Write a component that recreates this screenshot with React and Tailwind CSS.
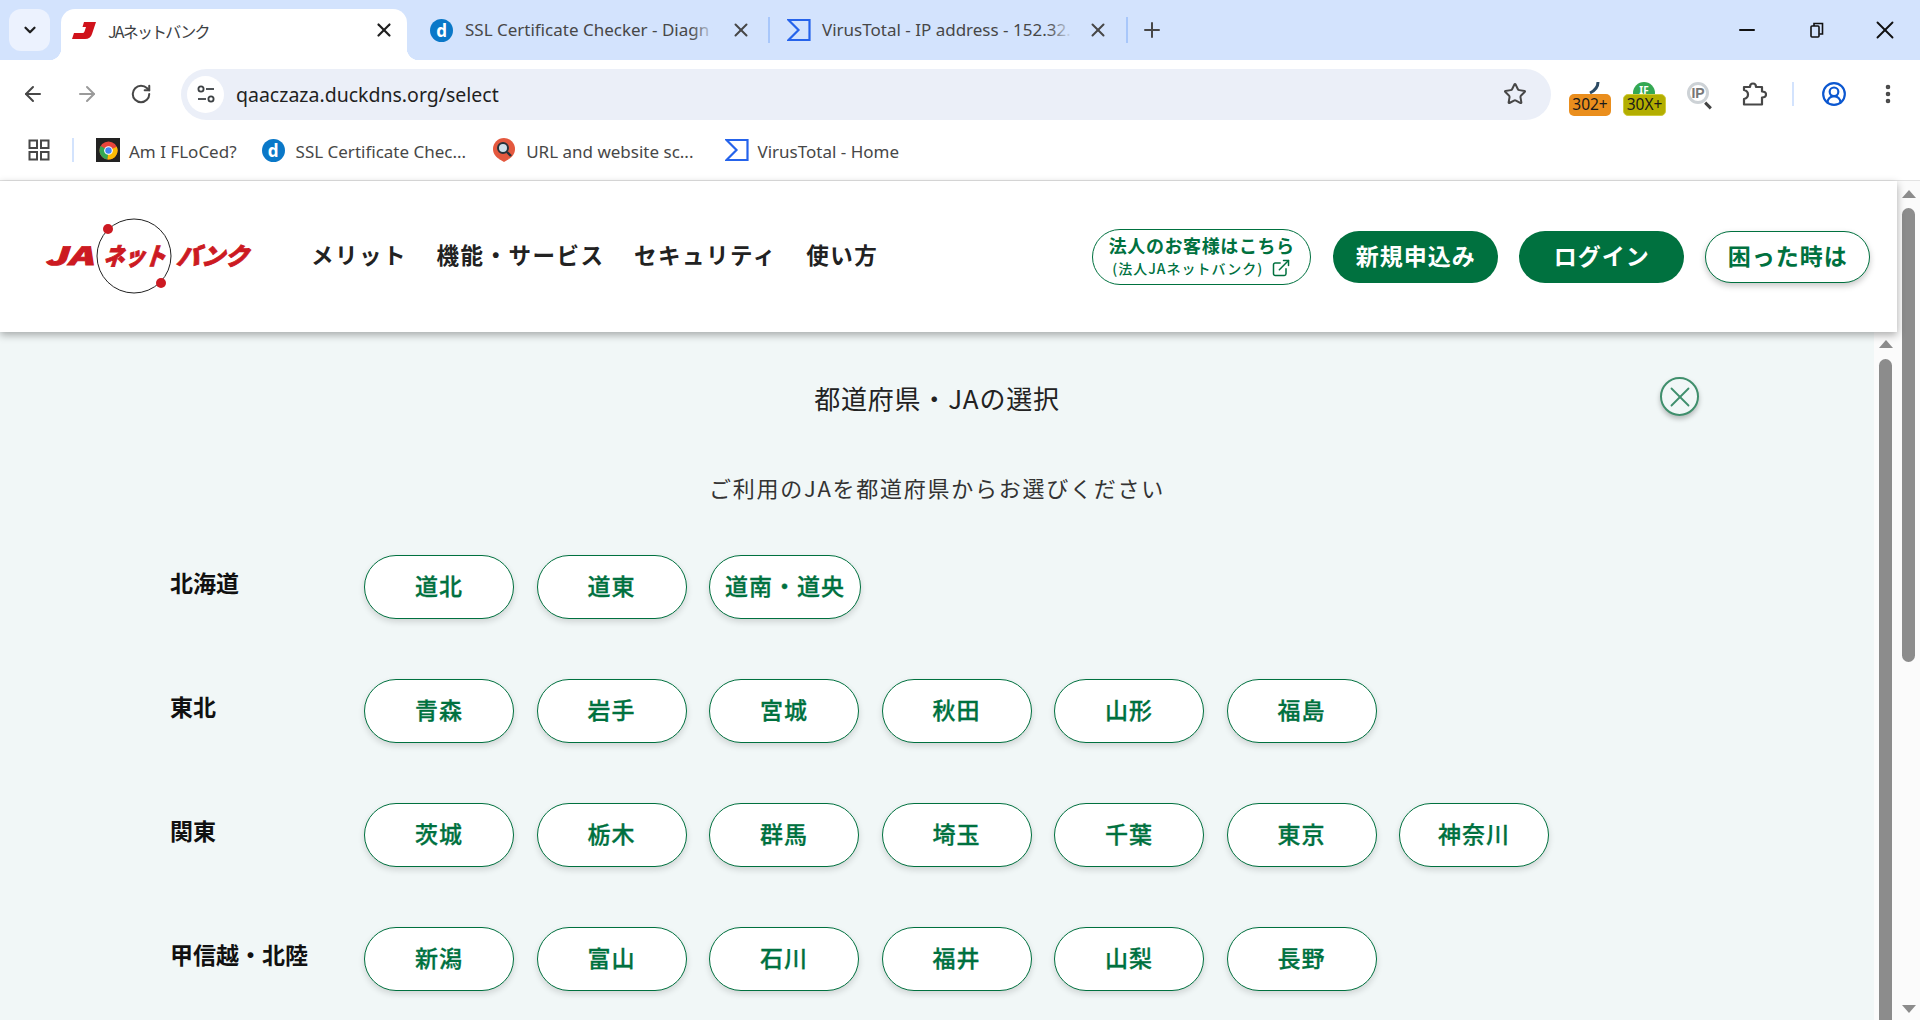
import { ArrowLeft, ArrowRight, RotateCw, Star, X, Plus, Minus, CircleUserRound, EllipsisVertical, ChevronDown, ExternalLink } from 'lucide-react';

const regions = [
  { name: '北海道', items: ['道北', '道東', '道南・道央'] },
  { name: '東北', items: ['青森', '岩手', '宮城', '秋田', '山形', '福島'] },
  { name: '関東', items: ['茨城', '栃木', '群馬', '埼玉', '千葉', '東京', '神奈川'] },
  { name: '甲信越・北陸', items: ['新潟', '富山', '石川', '福井', '山梨', '長野'] },
];

const uiFont = "font-['Noto_Sans','Noto_Sans_CJK_JP',sans-serif]";
const jpFont = "font-['Noto_Sans_CJK_JP','Noto_Sans',sans-serif]";

const VtIcon = () => (
  <svg width="24" height="24" viewBox="0 0 24 24" fill="none" stroke="#2563eb" strokeWidth="2.2" className="shrink-0">
    <path d="M1.5 2 H22.5 V22 H1.5 L11.5 12 Z" />
  </svg>
);

const DIcon = () => (
  <span className="flex h-[23px] w-[23px] shrink-0 items-center justify-center rounded-full bg-[#0a78c8] text-[17px] font-bold leading-none text-white">
    d
  </span>
);

const JIcon = () => (
  <svg width="24" height="17" viewBox="0 0 24 17">
    <path d="M12 0 H24 L20 12 Q18.5 17 13 17 H0 L2 11 H10.5 Q12 11 12.5 9.5 L14 5 H10.5 Z" fill="#d0121b" />
  </svg>
);

const ChromeIcon = () => (
  <span className="flex h-6 w-6 shrink-0 items-center justify-center bg-[#222]">
    <svg width="19" height="19" viewBox="0 0 20 20">
      <circle cx="10" cy="10" r="9.5" fill="#e8453c" />
      <path d="M10 10 L1.8 5.2 A9.5 9.5 0 0 0 9 19.4 Z" fill="#34a853" />
      <path d="M10 10 L18.7 6 A9.5 9.5 0 0 1 9 19.4 Z" fill="#fbbc05" />
      <circle cx="10" cy="10" r="4.6" fill="#fff" />
      <circle cx="10" cy="10" r="3.4" fill="#4285f4" />
    </svg>
  </span>
);

const ScanIcon = () => (
  <svg width="22" height="24" viewBox="0 0 22 24" className="shrink-0">
    <circle cx="11" cy="11" r="11" fill="#e4583e" />
    <path d="M6 21 H16 L11 24 Z" fill="#e4583e" />
    <circle cx="10" cy="10" r="5" fill="#cfe0ea" stroke="#26323a" strokeWidth="2" />
    <path d="M14 14 L18 18" stroke="#26323a" strokeWidth="2.4" />
  </svg>
);

const TuneIcon = () => (
  <svg width="22" height="22" viewBox="0 0 22 22" fill="none" stroke="#3c4043" strokeWidth="1.8">
    <circle cx="6" cy="6" r="2.6" />
    <path d="M11 6 H19" />
    <circle cx="16" cy="16" r="2.6" />
    <path d="M3 16 H11" />
  </svg>
);

const PuzzleIcon = () => (
  <svg width="25" height="24" viewBox="0 0 25 24" fill="none" stroke="#474747" strokeWidth="2.2" strokeLinejoin="round">
    <path d="M2 5 H8 Q8 1.5 11 1.5 Q14 1.5 14 5 H20 V9.5 Q24 9.5 24 12.5 Q24 15.5 20 15.5 V22.5 H2 V17 Q6 16 6 12.5 Q6 9 2 8 Z" />
  </svg>
);

const RestoreIcon = () => (
  <svg width="16" height="16" viewBox="0 0 16 16" fill="none" stroke="#111" strokeWidth="1.6">
    <rect x="2" y="4" width="8" height="11" rx="1" />
    <path d="M5 4 V1.5 H13.5 V12 H10.5" />
  </svg>
);

const AppsIcon = () => (
  <svg width="22" height="22" viewBox="0 0 22 22" fill="none" stroke="#474747" strokeWidth="2">
    <rect x="1.5" y="1.5" width="7.5" height="7.5" />
    <rect x="13" y="1.5" width="7.5" height="7.5" />
    <rect x="1.5" y="13" width="7.5" height="7.5" />
    <rect x="13" y="13" width="7.5" height="7.5" />
  </svg>
);

const Logo = () => (
  <svg width="218" height="78" viewBox="0 0 218 78" className="shrink-0">
    <circle cx="91" cy="38" r="37" fill="none" stroke="#222" strokeWidth="1" />
    <circle cx="65" cy="11" r="5" fill="#cc1a22" />
    <circle cx="118" cy="65" r="5" fill="#cc1a22" />
    <g fill="#cc1a22" stroke="#cc1a22" strokeWidth="0.9" fontFamily="'Noto Sans CJK JP', sans-serif" fontWeight="900">
      <text transform="translate(2,47) skewX(-18)" fontSize="25" textLength="48" lengthAdjust="spacingAndGlyphs">JA</text>
      <text transform="translate(60,47) skewX(-18)" fontSize="24" textLength="62" lengthAdjust="spacingAndGlyphs">ネット</text>
      <text transform="translate(133,47) skewX(-18)" fontSize="24" textLength="72" lengthAdjust="spacingAndGlyphs">バンク</text>
    </g>
  </svg>
);

const ScrollArrow = ({ down }) => (
  <div
    className={`h-0 w-0 border-x-[7px] border-x-transparent ${down ? 'border-t-[8px] border-t-[#8c8c8c]' : 'border-b-[8px] border-b-[#8c8c8c]'}`}
  />
);

const ChromeTab = ({ icon, title, width, iconGap }) => (
  <div className="flex h-[42px] items-center" style={{ width }}>
    {icon}
    <div className="relative w-[250px] whitespace-nowrap text-[17px] text-[#474747]" style={{ marginLeft: iconGap }}>
      {title}
      <div className="absolute inset-y-0 right-0 w-6 bg-gradient-to-r from-transparent to-[#d3e3fd]" />
    </div>
    <X size={22} strokeWidth={2.2} className="ml-[15px] text-[#474747]" />
  </div>
);

const Bookmark = ({ icon, label, gap }) => (
  <div className="flex items-center" style={{ gap }}>
    {icon}
    <span className="whitespace-nowrap pt-[3px] text-[17px] text-[#474747]">{label}</span>
  </div>
);

const PrefButton = ({ label }) => (
  <button className="flex h-16 min-w-[150px] items-center justify-center rounded-[32px] border border-[#00713f] bg-white px-[15px] pb-[4px] text-[23px] font-medium tracking-[1px] text-[#00713f] shadow-[0_3px_6px_rgba(0,0,0,0.14)] [-webkit-text-stroke:0.3px_#00713f]">
    {label}
  </button>
);

const App = () => {
  return (
    <div className={`flex h-[1020px] w-[1920px] flex-col overflow-hidden bg-white ${uiFont}`}>
      {/* tab strip */}
      <div className="flex h-[60px] shrink-0 items-start bg-[#d3e3fd] pt-[9px]">
        <div className="ml-[9px] flex h-[42px] w-[41px] items-center justify-center rounded-xl bg-[#ecf2fe]">
          <ChevronDown size={18} strokeWidth={3} className="text-[#1f1f1f]" />
        </div>
        <div className="relative ml-[11px] flex h-[51px] w-[346px] items-start rounded-t-[14px] bg-white pt-[10px]">
          <div className="absolute bottom-0 left-[-12px] h-3 w-3 bg-[radial-gradient(circle_at_0_0,#d3e3fd_12px,#ffffff_12.5px)]" />
          <div className="absolute bottom-0 right-[-12px] h-3 w-3 bg-[radial-gradient(circle_at_100%_0,#d3e3fd_12px,#ffffff_12.5px)]" />
          <div className="ml-[11px] mt-[3px]">
            <JIcon />
          </div>
          <span className={`ml-[12px] w-[265px] whitespace-nowrap text-[16px] tracking-[-1.8px] text-[#3c4043] ${jpFont}`}>JAネットバンク</span>
          <X size={22} strokeWidth={2.4} className="text-[#1f1f1f]" />
        </div>
        <div className="ml-[23px]">
          <ChromeTab icon={<DIcon />} title="SSL Certificate Checker - Diagn" width={338} iconGap={12} />
        </div>
        <div className="mt-[8px] h-[26px] w-[2px] bg-[#a8c7fa]" />
        <div className="ml-[17px]">
          <ChromeTab icon={<VtIcon />} title="VirusTotal - IP address - 152.32." width={339} iconGap={11} />
        </div>
        <div className="mt-[8px] h-[26px] w-[2px] bg-[#a8c7fa]" />
        <Plus size={24} strokeWidth={2} className="ml-[12px] mt-[9px] text-[#474747]" />
        <Minus size={24} strokeWidth={2} className="ml-[571px] mt-[9px] text-[#111]" />
        <div className="ml-[50px] mt-[13px]">
          <RestoreIcon />
        </div>
        <X size={30} strokeWidth={1.5} className="ml-[45px] mt-[6px] text-[#111]" />
      </div>

      {/* toolbar */}
      <div className="flex h-[69px] shrink-0 items-center rounded-t-xl bg-white pb-[1px] pl-[21px]">
        <ArrowLeft size={24} strokeWidth={2} className="text-[#474747]" />
        <ArrowRight size={24} strokeWidth={2} className="ml-[30px] text-[#9a9a9a]" />
        <RotateCw size={22} strokeWidth={2.2} className="ml-[31px] text-[#474747]" />
        <div className="ml-[29px] flex h-[51px] w-[1370px] items-center rounded-full bg-[#ebeff8] pl-[6px] pr-[24px]">
          <div className="flex h-[37px] w-[37px] items-center justify-center rounded-full bg-white">
            <TuneIcon />
          </div>
          <span className="ml-[12px] flex-1 pt-[1px] text-[19.5px] text-[#1f1f1f]">qaaczaza.duckdns.org/select</span>
          <Star size={24} strokeWidth={2} className="text-[#474747]" />
        </div>
        <div className="relative ml-[18px] mt-[9px] h-[34px] w-[42px]">
          <svg width="42" height="14" viewBox="0 0 42 14" className="absolute left-0 top-0">
            <path d="M29 0 Q29 7 21 11" fill="none" stroke="#2c4a63" strokeWidth="3" />
          </svg>
          <span className="absolute bottom-0 left-0 flex h-[22px] w-[42px] items-center justify-center rounded-[5px] bg-[#ea8e1d] text-[15.5px] leading-none text-[#1a1a1a]">302+</span>
        </div>
        <div className="relative ml-[12px] mt-[9px] h-[34px] w-[43px]">
          <div className="absolute left-[10px] top-0 flex h-[22px] w-[22px] justify-center rounded-full bg-[#34a853] pt-[3px] text-[10px] font-bold leading-none text-white">IF</div>
          <span className="absolute bottom-0 left-0 flex h-[22px] w-[43px] items-center justify-center rounded-[5px] border border-[#cfcb3a] bg-[#b3ae00] text-[15.5px] leading-none text-[#1a1a1a]">30X+</span>
        </div>
        <div className="relative mb-[2px] ml-[21px] flex h-[22px] w-[22px] items-center justify-center rounded-full border-[3px] border-[#cdd2d6] font-['Liberation_Sans',sans-serif] text-[14px] font-bold leading-none text-[#777]">
          IP
          <div className="absolute bottom-[-6px] right-[-6px] h-[3px] w-[8px] rotate-45 bg-[#444]" />
        </div>
        <div className="ml-[33px]">
          <PuzzleIcon />
        </div>
        <div className="ml-[25px] h-[24px] w-[2px] bg-[#d3e3fd]" />
        <CircleUserRound size={26} strokeWidth={2} className="ml-[27px] text-[#0b57d0]" />
        <EllipsisVertical size={24} strokeWidth={2.6} className="ml-[29px] text-[#474747]" />
      </div>

      {/* bookmarks */}
      <div className="flex h-[52px] shrink-0 items-center border-b border-[#e3e3e3] bg-white pb-[9px] pl-[28px]">
        <AppsIcon />
        <div className="mx-[22px] h-6 w-[2px] bg-[#d3e3fd]" />
        <Bookmark icon={<ChromeIcon />} label="Am I FLoCed?" gap={9} />
        <div className="ml-[25px]">
          <Bookmark icon={<DIcon />} label="SSL Certificate Chec..." gap={11} />
        </div>
        <div className="ml-[27px]">
          <Bookmark icon={<ScanIcon />} label="URL and website sc..." gap={11} />
        </div>
        <div className="ml-[32px]">
          <Bookmark icon={<VtIcon />} label="VirusTotal - Home" gap={8} />
        </div>
      </div>

      {/* page */}
      <div className={`flex min-h-0 flex-1 ${jpFont}`}>
        <div className="flex min-w-0 flex-1 flex-col">
          <header className="relative z-10 flex h-[151px] shrink-0 items-center bg-white pl-[43px] shadow-[0_3px_8px_rgba(0,0,0,0.32)]">
            <Logo />
            <nav className="ml-[50px] flex gap-[29.5px] pb-[4px] text-[22.5px] font-semibold tracking-[1.5px] text-[#222]">
              <span>メリット</span>
              <span>機能・サービス</span>
              <span>セキュリティ</span>
              <span>使い方</span>
            </nav>
            <div className="ml-[214px] flex items-center">
              <div className="flex h-[56px] w-[219px] flex-col items-center justify-center rounded-[28px] border border-[#00713f] pb-[3px] text-[#00713f]">
                <span className="text-[18px] font-bold leading-[26px] tracking-[0.6px]">法人のお客様はこちら</span>
                <span className="flex items-center gap-[8px] text-[14px] font-medium leading-[20px] tracking-[1px]">
                  (法人JAネットバンク)
                  <ExternalLink size={20} strokeWidth={1.8} />
                </span>
              </div>
              <div className="ml-[22px] flex h-[52px] w-[165px] items-center justify-center rounded-[26px] bg-[#00713f] pb-[3px] text-[23px] font-bold tracking-[1px] text-white">
                新規申込み
              </div>
              <div className="ml-[21px] flex h-[52px] w-[165px] items-center justify-center rounded-[26px] bg-[#00713f] pb-[3px] text-[23px] font-bold tracking-[1px] text-white">
                ログイン
              </div>
              <div className="ml-[21px] flex h-[52px] w-[165px] items-center justify-center rounded-[26px] border border-[#00713f] bg-white pb-[3px] text-[23px] font-bold tracking-[1px] text-[#00713f] shadow-[0_3px_6px_rgba(0,0,0,0.22)]">
                困った時は
              </div>
            </div>
          </header>

          <div className="flex min-h-0 flex-1">
            <main className="relative min-w-0 flex-1 overflow-hidden bg-[#f1f7f7] text-center">
              <h1 className="pt-[48px] text-[26px] font-normal leading-[36px] tracking-[0.8px] text-[#222]">都道府県・JAの選択</h1>
              <button className="absolute right-[175px] top-[45px] flex h-[39px] w-[39px] items-center justify-center rounded-full border-2 border-[#3f8f6c] bg-[#f1f7f7] text-[#3f8f6c] shadow-[0_3px_5px_rgba(0,0,0,0.25)]">
                <X size={34} strokeWidth={1.3} />
              </button>
              <p className="mt-[55px] text-[22px] leading-[32px] tracking-[1.75px] text-[#333]">ご利用のJAを都道府県からお選びください</p>
              <div className="mt-[52px] flex flex-col gap-[60px] pl-[170px] text-left">
                {regions.map((region) => (
                  <div key={region.name} className="flex">
                    <div className="w-[194px] shrink-0 pt-[10px] text-[23px] font-bold leading-[34px] text-[#111]">{region.name}</div>
                    <div className="flex gap-[22.5px]">
                      {region.items.map((item) => (
                        <PrefButton key={item} label={item} />
                      ))}
                    </div>
                  </div>
                ))}
              </div>
            </main>
            <div className="flex w-[23px] shrink-0 flex-col items-center bg-[#fbfbfb] pt-[8px]">
              <ScrollArrow />
              <div className="mt-[11px] w-[13px] flex-1 rounded-t-full bg-[#8c8c8c]" />
            </div>
          </div>
        </div>

        <div className="flex w-[23px] shrink-0 flex-col items-center bg-[#fbfbfb] pb-[7px] pt-[9px]">
          <ScrollArrow />
          <div className="mt-[10px] h-[454px] w-[13px] rounded-full bg-[#8c8c8c]" />
          <div className="flex-1" />
          <ScrollArrow down />
        </div>
      </div>
    </div>
  );
};

export default App;
